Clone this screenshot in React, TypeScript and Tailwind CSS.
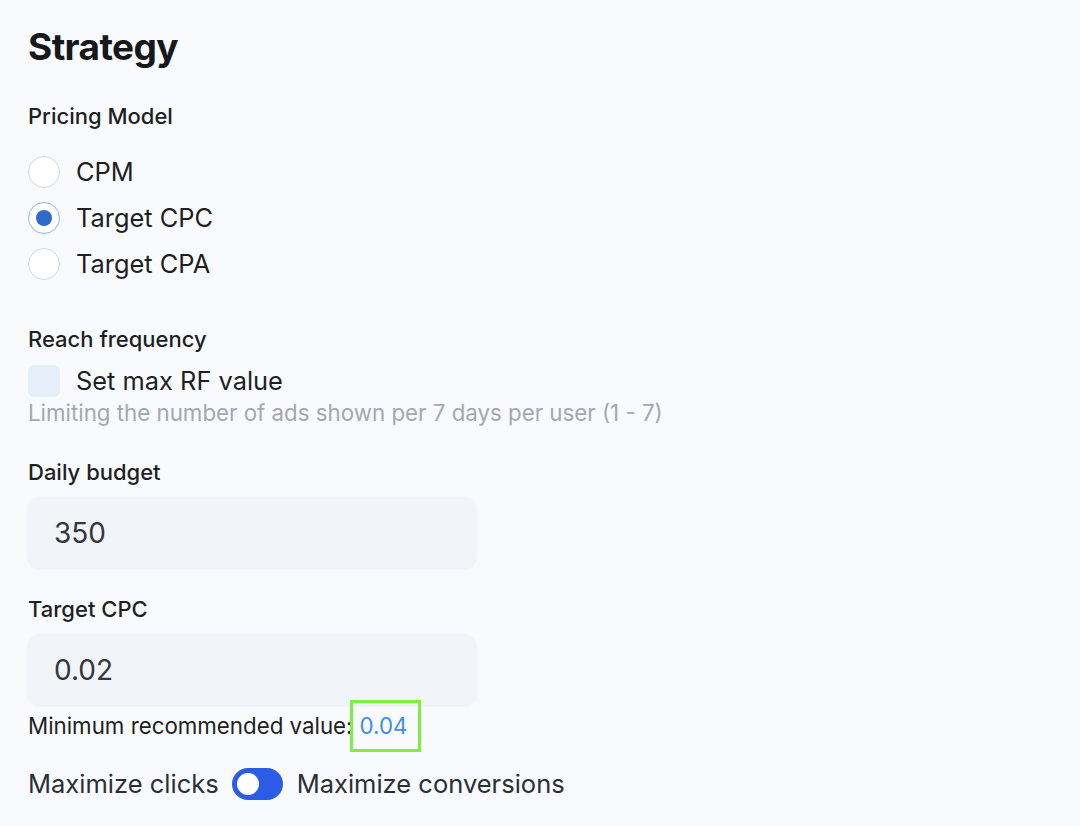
import React from "react"

const font = { fontFamily: "Inter, 'Noto Sans', sans-serif" }

function Radio({ label, checked }: { label: string; checked?: boolean }) {
  return (
    <div className="flex h-[46px] items-center">
      <div
        className={`flex h-[32px] w-[32px] items-center justify-center rounded-full bg-white border ${
          checked ? "border-[#8fb6ec]" : "border-[#d3d9e2]"
        }`}
      >
        {checked && <div className="h-[16px] w-[16px] rounded-full bg-[#2f69c9]" />}
      </div>
      <span className="ml-[16px] text-[25.4px] leading-[30px] text-[#1d1f23]">{label}</span>
    </div>
  )
}

function Field({ label, value }: { label: string; value: string }) {
  return (
    <div className="flex flex-col">
      <div className="text-[22px] leading-[28px] font-medium text-[#1d1f23]">{label}</div>
      <div className="mt-[11px] flex h-[71px] w-[448px] items-center rounded-[12px] bg-[#f1f4f8] px-[26px] text-[28px] text-[#33373d] shadow-[0_1px_3px_rgba(120,140,200,0.12)]">
        {value}
      </div>
    </div>
  )
}

export default function App() {
  return (
    <div className="min-h-[826px] w-full bg-[#f9fafd] px-[28px] pt-[24px]" style={font}>
      <h1 className="text-[37px] leading-[46px] font-bold tracking-[-0.6px] text-[#16181b]">Strategy</h1>

      <div className="mt-[32px] text-[22px] leading-[28px] font-medium text-[#1d1f23]">Pricing Model</div>
      <div className="mt-[19px] flex flex-col">
        <Radio label="CPM" />
        <Radio label="Target CPC" checked />
        <Radio label="Target CPA" />
      </div>

      <div className="mt-[38px] text-[22px] leading-[28px] font-medium text-[#1d1f23]">Reach frequency</div>
      <div className="mt-[12px] flex h-[32px] items-center">
        <div className="h-[32px] w-[32px] rounded-[6px] bg-[#e5eef9]" />
        <span className="ml-[16px] text-[25.4px] leading-[30px] text-[#1d1f23]">Set max RF value</span>
      </div>
      <div className="mt-[2px] text-[22.3px] leading-[28px] text-[#a3a8b0]">
        Limiting the number of ads shown per 7 days per user (1 - 7)
      </div>

      <div className="mt-[31px]">
        <Field label="Daily budget" value="350" />
      </div>
      <div className="mt-[27px]">
        <Field label="Target CPC" value="0.02" />
      </div>

      <div className="mt-[7px] text-[22.3px] leading-[28px] text-[#1d1f23]">
        Minimum recommended value:
        <span className="relative ml-[7px] text-[#3d8fe0]">
          0.04
          <span className="absolute -left-[10px] -right-[14px] top-1/2 h-[52px] -translate-y-1/2 border-[3px] border-[#7cf042]" />
        </span>
      </div>

      <div className="mt-[28px] flex h-[32px] items-center text-[25.5px] leading-[30px] text-[#2b2f35]">
        <span>Maximize clicks</span>
        <div className="ml-[13px] flex h-[32px] w-[51px] items-center rounded-full bg-[#2a5ce6] px-[5px]">
          <div className="h-[22px] w-[22px] rounded-full bg-white" />
        </div>
        <span className="ml-[14px]">Maximize conversions</span>
      </div>
    </div>
  )
}
